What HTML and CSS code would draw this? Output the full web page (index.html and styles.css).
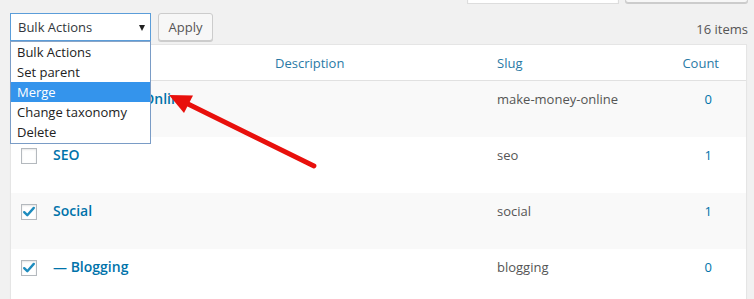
FILE: index.html
```html
<!DOCTYPE html>
<html>
<head>
<meta charset="utf-8">
<link rel="stylesheet" href="styles.css">
</head>
<body>
<div class="wrap">
  <div class="search-strip">
    <span class="search-input"></span>
    <span class="search-btn"></span>
  </div>
  <div class="tablenav">
    <div class="select">Bulk Actions<span class="caret"></span></div>
    <button class="btn">Apply</button>
    <span class="items">16 items</span>
  </div>
  <div class="table">
    <div class="row head">
      <div class="c-cb"></div>
      <div class="c-name"></div>
      <div class="c-desc">Description</div>
      <div class="c-slug">Slug</div>
      <div class="c-count">Count</div>
    </div>
    <div class="row alt">
      <div class="c-cb"><span class="cb"></span></div>
      <div class="c-name"><a>Make Money Online</a></div>
      <div class="c-desc"></div>
      <div class="c-slug">make-money-online</div>
      <div class="c-count"><a>0</a></div>
    </div>
    <div class="row">
      <div class="c-cb"><span class="cb"></span></div>
      <div class="c-name"><a>SEO</a></div>
      <div class="c-desc"></div>
      <div class="c-slug">seo</div>
      <div class="c-count"><a>1</a></div>
    </div>
    <div class="row alt">
      <div class="c-cb"><span class="cb checked"><svg viewBox="0 0 16 16" width="16" height="16"><path d="M3.2 8.2 L6.3 11.2 L12.8 3.9" fill="none" stroke="#1e8cbe" stroke-width="2.4" stroke-linecap="round" stroke-linejoin="round"/></svg></span></div>
      <div class="c-name"><a>Social</a></div>
      <div class="c-desc"></div>
      <div class="c-slug">social</div>
      <div class="c-count"><a>1</a></div>
    </div>
    <div class="row">
      <div class="c-cb"><span class="cb checked"><svg viewBox="0 0 16 16" width="16" height="16"><path d="M3.2 8.2 L6.3 11.2 L12.8 3.9" fill="none" stroke="#1e8cbe" stroke-width="2.4" stroke-linecap="round" stroke-linejoin="round"/></svg></span></div>
      <div class="c-name"><a>— Blogging</a></div>
      <div class="c-desc"></div>
      <div class="c-slug">blogging</div>
      <div class="c-count"><a>0</a></div>
    </div>
  </div>
</div>
<ul class="dropdown">
  <li>Bulk Actions</li>
  <li>Set parent</li>
  <li class="sel">Merge</li>
  <li>Change taxonomy</li>
  <li>Delete</li>
</ul>
<svg class="arrow" width="754" height="299" viewBox="0 0 754 299">
  <line x1="314" y1="166" x2="186" y2="103" stroke="#e8100c" stroke-width="4.8" stroke-linecap="round"/>
  <polygon points="169,95 193,95.5 184,113" fill="#e8100c"/>
</svg>
</body>
</html>
```

FILE: styles.css
```css
html, body {
  margin: 0;
  padding: 0;
  background: #f1f1f1;
  font-family: "Open Sans", "Noto Sans", "Liberation Sans", sans-serif;
  font-size: 13px;
  color: #444;
  overflow: hidden;
}
.wrap {
  padding: 0 6px 0 10px;
}
.search-strip {
  height: 4px;
  display: flex;
  justify-content: flex-end;
  align-items: flex-end;
  overflow: hidden;
  gap: 6px;
}
.search-input {
  display: block;
  width: 150px;
  height: 28px;
  background: #fff;
  border: 1px solid #ddd;
  box-shadow: inset 0 1px 2px rgba(0,0,0,0.07);
}
.search-btn {
  display: block;
  width: 121px;
  height: 26px;
  margin-bottom: 1px;
  background: #f7f7f7;
  border: 1px solid #ccc;
  border-radius: 3px;
  box-shadow: 0 1px 0 #ccc;
}
.tablenav {
  margin-top: 9px;
  height: 28px;
  display: flex;
  align-items: center;
}
.select {
  box-sizing: border-box;
  width: 141px;
  height: 28px;
  border: 1px solid #5b9dd9;
  background: #fff;
  color: #32373c;
  padding: 0 0 0 7px;
  line-height: 26px;
  position: relative;
}
.caret {
  position: absolute;
  right: 5px;
  top: 11px;
  width: 0;
  height: 0;
  border-left: 3.5px solid transparent;
  border-right: 3.5px solid transparent;
  border-top: 6px solid #222;
}
.btn {
  margin-left: 7px;
  box-sizing: border-box;
  width: 55px;
  height: 28px;
  background: #f7f7f7;
  border: 1px solid #ccc;
  border-radius: 3px;
  box-shadow: 0 1px 0 #ccc;
  color: #555;
  font-family: inherit;
  font-size: 13px;
  padding: 0;
}
.items {
  margin-left: auto;
  color: #555;
  padding-top: 3px;
}
.table {
  margin-top: 3px;
  margin-right: 1px;
  background: #fff;
  border: 1px solid #e5e5e5;
  box-shadow: 0 1px 1px rgba(0,0,0,0.04);
}
.row {
  display: grid;
  grid-template-columns: 32px 222px 222px 163px 1fr;
  height: 56px;
  box-sizing: border-box;
}
.row.alt { background: #f9f9f9; }
.row.head {
  height: 36px;
  background: #fff;
  border-bottom: 1px solid #e1e1e1;
  align-items: center;
}
.row.head > div { padding-top: 1px; color: #2a7aa6; }
.row > div { padding-left: 10px; white-space: nowrap; overflow: hidden; }
.row:not(.head) > div { padding-top: 8px; line-height: 20px; }
.row:not(.head) .c-cb { padding-top: 11px; }
.cb {
  display: block;
  box-sizing: border-box;
  width: 16px;
  height: 16px;
  border: 1px solid #b4b9be;
  background: #fff;
  box-shadow: inset 0 1px 2px rgba(0,0,0,0.1);
  position: relative;
}
.cb svg { position: absolute; left: -1px; top: -1px; }
.c-name a {
  color: #0073aa;
  font-weight: 600;
  font-size: 14px;
}
.c-slug { color: #555; }
.c-count { text-align: right; padding-right: 27px; }
.row:not(.head) .c-count { padding-right: 34px; }
.c-count a { color: #0073aa; }
.dropdown {
  position: absolute;
  left: 10px;
  top: 41px;
  width: 141px;
  box-sizing: border-box;
  margin: 0;
  padding: 0 0 1px;
  list-style: none;
  background: #fff;
  border: 1px solid #7a9cc6;
  border-top-color: #8aa5c7;
  color: #222;
}
.dropdown li {
  height: 20px;
  line-height: 20px;
  padding-left: 6px;
}
.dropdown li.sel {
  background: #3494ec;
  color: #fff;
}
.arrow {
  position: absolute;
  left: 0;
  top: 0;
  pointer-events: none;
}
```
